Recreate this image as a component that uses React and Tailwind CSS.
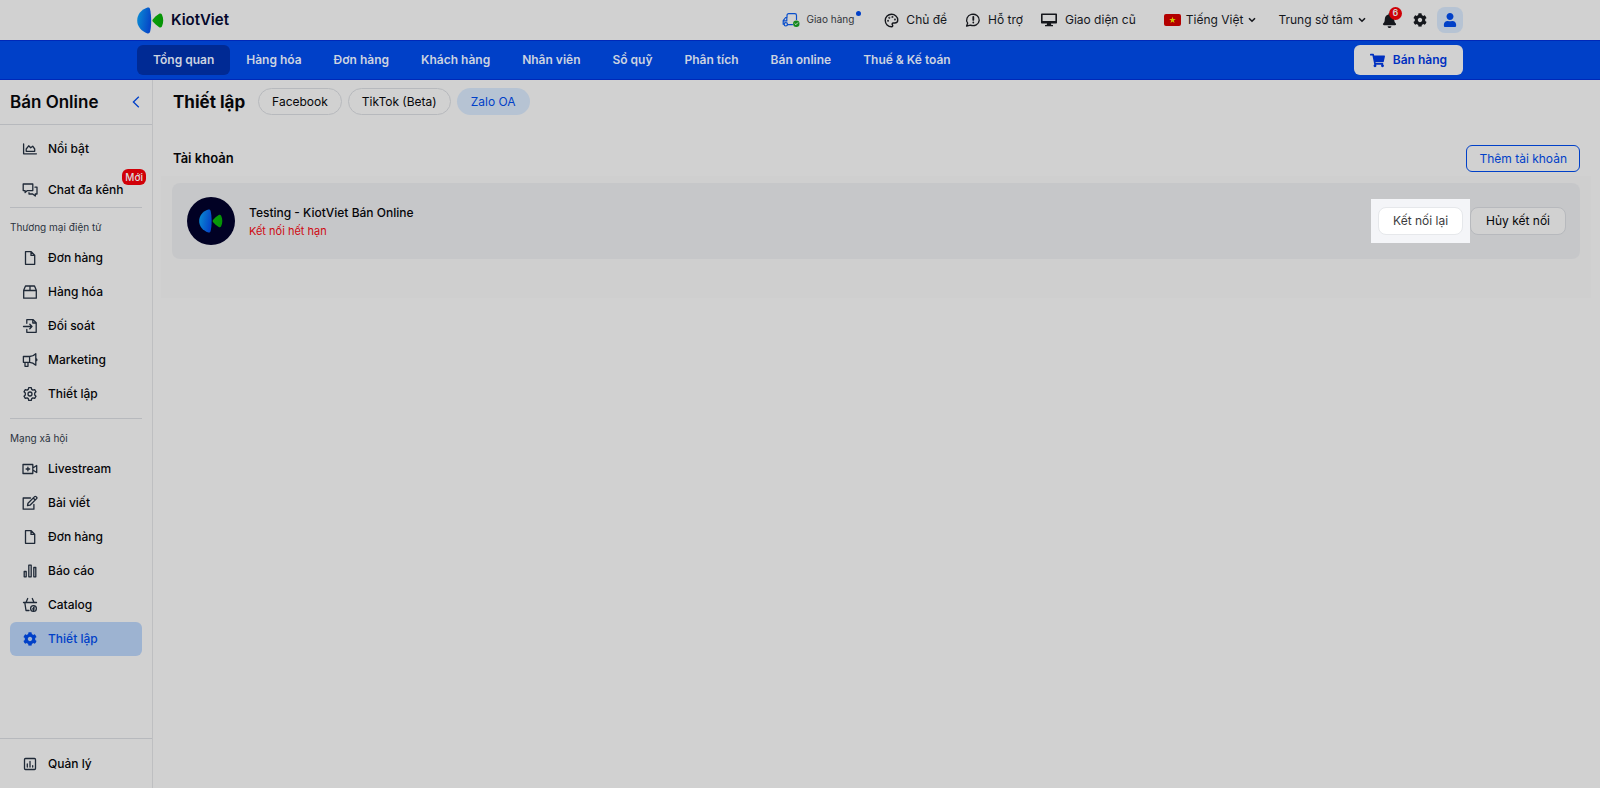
import { FaBell, FaCog, FaShoppingCart, FaUser } from 'react-icons/fa';
import { Palette } from 'lucide-react';
import clsx from 'clsx';

function Logo({ className }) {
  return (
    <svg viewBox="0 0 27 27" className={className} aria-hidden="true">
      <defs>
        <linearGradient id="logoBlue" x1="0" y1="0" x2="1" y2="0.3">
          <stop offset="0" stopColor="#0a8fd4" />
          <stop offset="1" stopColor="#0648c8" />
        </linearGradient>
        <linearGradient id="logoGreen" x1="0" y1="0" x2="1" y2="0">
          <stop offset="0" stopColor="#0b9c0b" />
          <stop offset="1" stopColor="#049304" />
        </linearGradient>
      </defs>
      <path d="M10.5.6c1.2-.3 2.1.2 2.5 1.3 1.6 6.4 1.6 16.8 0 23.2-.4 1.1-1.3 1.6-2.5 1.3C4.2 24.3.2 19.3.2 13.5S4.2 2.7 10.5.6z" fill="url(#logoBlue)" />
      <path d="M15.7 12.4c1.8-2.2 4-4.1 6.5-5.7 1-.6 2.2-.3 2.7.8 1.8 3.7 1.8 8.3 0 12-.5 1.1-1.7 1.4-2.7.8-2.5-1.6-4.7-3.5-6.5-5.7-.5-.7-.5-1.5 0-2.200z" fill="url(#logoGreen)" />
    </svg>
  );
}

function Icon({ children }) {
  return (
    <svg
      viewBox="0 0 16 16"
      fill="none"
      stroke="currentColor"
      strokeWidth="1.3"
      strokeLinecap="round"
      strokeLinejoin="round"
      className="size-4 shrink-0"
      aria-hidden="true"
    >
      {children}
    </svg>
  );
}

const FileIcon = () => (
  <Icon>
    <path d="M3.500 1.700h5.700L12.700 5.200v9.100H3.500zM9 1.700v3.700h3.700" />
  </Icon>
);

const ChartAreaIcon = () => (
  <Icon>
    <path d="M1.600 3v9.800h12.800M4.200 10.300V8l2.500-3.200 2 2 2-1.600 2 2.800v2.300z" />
  </Icon>
);

const ChatIcon = () => (
  <Icon>
    <path d="M1.200 2h9.600v6.600H5.400L3.100 10.500V8.600H1.200zM13 5.200h2v6.800h-1.700v2l-2.600-2H7v-1.300" />
  </Icon>
);

const BoxIcon = () => (
  <Icon>
    <path d="M1.700 6.300 3.500 2h9l1.800 4.300v7.900H1.700zM1.700 6.500h12.600M8 2v4.500" />
  </Icon>
);

const ImportIcon = () => (
  <Icon>
    <path d="M4.800 5.300V1.700h6.400l3 3v9.600H4.800v-3M10.800 1.700V5h3.400M1.500 8.500H10M7.800 6.300 10 8.500l-2.200 2.200" />
  </Icon>
);

const MegaphoneIcon = () => (
  <Icon>
    <path d="M1.400 4.500h6.200c2.300 0 4.400-1 6.200-2.800v11.500c-1.800-1.800-3.900-2.900-6.200-2.900H1.400zM7.600 4.500v5.800M3 10.300v4h3v-4M14 6.500c1.200.4 1.200 2 0 2.400" />
  </Icon>
);

const GearIcon = () => (
  <Icon>
    <path d="M6.700 1.600h2.600l.4 1.800 1.200.7 1.800-.5 1.300 2.200L12.700 7v2l1.300 1.200-1.300 2.200-1.800-.5-1.200.7-.4 1.800H6.700l-.4-1.800-1.200-.7-1.800.5L2 10.200 3.300 9V7L2 5.800l1.300-2.200 1.800.5 1.200-.7z" />
    <circle cx="8" cy="8" r="2" />
  </Icon>
);

const VideoIcon = () => (
  <Icon>
    <path d="M1 3.500h9.800v9H1zM10.800 7l3.900-2.500v7L10.800 9M5.900 6.200v3.600M4.100 8h3.600" />
  </Icon>
);

const EditIcon = () => (
  <Icon>
    <path d="M8.500 3H1.200v11.200h10.700V9.500M6 8.200 12.600 1.600c.4-.4 1-.4 1.400 0l.6.6c.4.4.4 1 0 1.400L8 10.200l-2.500.5zM11.200 3l2 2" />
  </Icon>
);

const BarsIcon = () => (
  <Icon>
    <path d="M2.200 8.500h2v5.300h-2zM6.800 2.200h2.400v11.600H6.800zM11.800 4.500h2v9.300h-2z" />
  </Icon>
);

const BasketIcon = () => (
  <Icon>
    <path d="M1.500 5.500h13M5.700 1.500 4 5.500M10.300 1.500 12 5.500M2.800 5.500l1.200 8H7" />
    <circle cx="11.500" cy="11.500" r="2.900" />
    <path d="M11.500 14.200v-3.400c0-.6.400-.9 1-.9M10.600 11.900h1.700" />
  </Icon>
);

const ReportIcon = () => (
  <Icon>
    <rect x="2.500" y="2.500" width="11" height="11" rx="1" />
    <path d="M5.300 8v3M8 5.500V11M10.700 9.700V11" />
  </Icon>
);

const TruckIcon = () => (
  <svg viewBox="0 0 18 16" fill="none" strokeLinecap="round" strokeLinejoin="round" className="h-4 w-[18px]" aria-hidden="true">
    <g stroke="#0b4fcb" strokeWidth="1.2">
      <path d="M5 5.500V3.400c0-1 .7-1.800 1.700-1.800h6.100c1 0 1.700.8 1.700 1.800v4M5 5.500H3.600L1.200 8.700v3.500h1M5.500 12.600h5M1.200 8.900h3.600V5.500" />
      <circle cx="3.800" cy="12.300" r="1.700" />
    </g>
    <circle cx="14.300" cy="11.700" r="3.200" fill="#148a1c" />
    <path d="m12.900 11.700 1 1 1.800-1.900" stroke="#d1d1d1" />
  </svg>
);

const SupportIcon = () => (
  <Icon>
    <path d="M1.600 14 2.700 11.100A6.300 5.700 0 1 1 5.500 13.200z" />
    <path d="M8.300 4.800v3.100M8.300 10.400v.1" strokeWidth="1.800" />
  </Icon>
);

const MonitorIcon = () => (
  <svg viewBox="0 0 16 16" className="size-4" aria-hidden="true">
    <path fillRule="evenodd" fill="currentColor" d="M1 1.500h14c.6 0 1 .4 1 1v8c0 .6-.4 1-1 1h-5l.3 1.600h1.700v1.200H4v-1.200h1.700L6 11.500H1c-.6 0-1-.4-1-1v-8c0-.6.4-1 1-1zM1.600 3v5.900h12.800V3z" />
  </svg>
);

const FlagIcon = () => (
  <svg viewBox="0 0 17 12" className="h-3 w-[17px]" aria-hidden="true">
    <rect width="17" height="12" rx="2" fill="#b30000" />
    <path d="m8.500 2.700.8 2.400h2.500l-2 1.500.7 2.400-2-1.500-2 1.500.7-2.400-2-1.500h2.500z" fill="#d1c400" />
  </svg>
);

const ChevronIcon = () => (
  <svg viewBox="0 0 8 6" fill="none" stroke="currentColor" strokeWidth="1.6" className="h-[6px] w-2" aria-hidden="true">
    <path d="m1 1.200 3 3 3-3" />
  </svg>
);

const navItems = ['Tổng quan', 'Hàng hóa', 'Đơn hàng', 'Khách hàng', 'Nhân viên', 'Sổ quỹ', 'Phân tích', 'Bán online', 'Thuế & Kế toán'];

const commerceItems = [
  { label: 'Đơn hàng', icon: <FileIcon /> },
  { label: 'Hàng hóa', icon: <BoxIcon /> },
  { label: 'Đối soát', icon: <ImportIcon /> },
  { label: 'Marketing', icon: <MegaphoneIcon /> },
  { label: 'Thiết lập', icon: <GearIcon /> },
];

const socialItems = [
  { label: 'Livestream', icon: <VideoIcon /> },
  { label: 'Bài viết', icon: <EditIcon /> },
  { label: 'Đơn hàng', icon: <FileIcon /> },
  { label: 'Báo cáo', icon: <BarsIcon /> },
  { label: 'Catalog', icon: <BasketIcon /> },
  { label: 'Thiết lập', icon: <FaCog className="size-[14px]" />, active: true },
];

function SideItem({ label, icon, active }) {
  return (
    <a
      href="#"
      className={clsx(
        'flex h-[34px] items-center gap-[10px] rounded-md pl-3 text-xs font-medium',
        active ? 'bg-[#9db3d1] text-[#0040c8]' : 'text-[#060609]'
      )}
    >
      <span className={clsx('flex w-4 justify-center', !active && 'text-[#1f2937]')}>{icon}</span>
      {label}
    </a>
  );
}

function TopBar() {
  return (
    <header className="flex h-10 items-center justify-between px-[137px] text-xs text-[#15171c]">
      <a href="#" className="flex items-center gap-[7px] text-[15px] font-semibold text-[#04082b]">
        <Logo className="size-[27px]" />
        KiotViet
      </a>
      <div className="flex items-center">
        <a href="#" className="relative mr-[30px] flex items-center gap-[6px] text-[10px] text-[#33363c]">
          <TruckIcon />
          Giao hàng
          <span className="absolute -top-[1px] -right-[7px] size-[5px] rounded-full bg-[#0040c8]" />
        </a>
        <button className="mr-[18px] flex items-center gap-[7px]">
          <Palette className="size-[15px]" strokeWidth={2.2} />
          Chủ đề
        </button>
        <a href="#" className="mr-[18px] flex items-center gap-[7px]">
          <SupportIcon />
          Hỗ trợ
        </a>
        <a href="#" className="mr-[28px] flex items-center gap-2">
          <MonitorIcon />
          Giao diện cũ
        </a>
        <button className="mr-[22px] flex items-center gap-[5px]">
          <FlagIcon />
          Tiếng Việt
          <ChevronIcon />
        </button>
        <button className="mr-[16px] flex items-center gap-[5px]">
          Trung sờ tâm
          <ChevronIcon />
        </button>
        <button className="relative mr-4" aria-label="Thông báo">
          <FaBell className="size-[15px]" />
          <span className="absolute -top-[6px] -right-[5px] flex size-[13px] items-center justify-center rounded-full bg-[#cf0006] text-[9px] font-semibold text-[#d1d1d1]">
            6
          </span>
        </button>
        <button className="mr-[10px]" aria-label="Cài đặt">
          <FaCog className="size-[14px]" />
        </button>
        <button className="flex size-[26px] items-center justify-center rounded-lg bg-[#b6c3d3] text-[#0040c8]" aria-label="Tài khoản">
          <FaUser className="size-[14px]" />
        </button>
      </div>
    </header>
  );
}

function MainNav() {
  return (
    <nav className="flex h-10 items-center justify-between border-y border-[#0028b8] bg-[#0040c8] px-[137px]">
      <div className="flex">
        {navItems.map((item, index) => (
          <a
            key={item}
            href="#"
            className={clsx(
              'flex h-[30px] items-center rounded-md px-4 text-xs font-semibold text-[#ccd3e0]',
              index === 0 && 'bg-[#002a94]'
            )}
          >
            {item}
          </a>
        ))}
      </div>
      <button className="flex h-[30px] items-center gap-2 rounded-md bg-[#d1d1d1] px-4 text-xs font-semibold text-[#0030c0]">
        <FaShoppingCart className="size-[15px]" />
        Bán hàng
      </button>
    </nav>
  );
}

function Sidebar() {
  return (
    <aside className="flex w-[153px] shrink-0 flex-col border-r border-[#bebfc1]">
      <div className="flex h-[45px] items-center justify-between border-b border-[#b7b9bd] pr-3 pl-[10px]">
        <h2 className="text-[17px] leading-6 font-semibold text-[#060609]">Bán Online</h2>
        <button className="text-[#0040c8]" aria-label="Thu gọn">
          <svg viewBox="0 0 8 12" fill="none" stroke="currentColor" strokeWidth="1.3" className="h-3 w-2">
            <path d="M6.800.8 1.400 6l5.400 5.200" />
          </svg>
        </button>
      </div>
      <div className="flex-1 px-[10px] pt-[7px]">
        <SideItem label="Nổi bật" icon={<ChartAreaIcon />} />
        <div className="relative mt-[7px]">
          <SideItem label="Chat đa kênh" icon={<ChatIcon />} />
          <span className="absolute -top-1 -right-1 flex h-4 items-center rounded-md bg-[#d10008] px-[3px] text-[10px] font-medium text-[#dcdcdc]">
            Mới
          </span>
        </div>
        <hr className="border-[#b7b9bd]" />
        <h3 className="mt-[9px] mb-1 text-[10px] leading-5 text-[#2b3340]">Thương mại điện tử</h3>
        {commerceItems.map((item) => (
          <SideItem key={item.label} {...item} />
        ))}
        <hr className="mt-[7px] border-[#b7b9bd]" />
        <h3 className="mt-[9px] mb-1 text-[10px] leading-5 text-[#2b3340]">Mạng xã hội</h3>
        {socialItems.map((item) => (
          <SideItem key={item.label} {...item} />
        ))}
      </div>
      <div className="flex h-[50px] flex-col justify-center border-t border-[#b7b9bd] px-[10px]">
        <SideItem label="Quản lý" icon={<ReportIcon />} />
      </div>
    </aside>
  );
}

export default function App() {
  return (
    <div className="flex min-h-screen flex-col bg-[#d1d1d1] font-['Inter',sans-serif] text-[#060609]">
      <TopBar />
      <MainNav />
      <div className="flex flex-1">
        <Sidebar />
        <main className="min-w-0 flex-1 pt-2 pr-[9px] pl-2">
          <div className="flex items-center pl-3">
            <h1 className="mr-[13px] text-[17px] leading-6 font-bold">Thiết lập</h1>
            <div className="flex gap-[6px] text-xs">
              <button className="h-[27px] rounded-full border border-[#b7b9bd] px-[13px]">Facebook</button>
              <button className="h-[27px] rounded-full border border-[#b7b9bd] px-[13px]">TikTok (Beta)</button>
              <button className="h-[27px] rounded-full bg-[#b6c3d3] px-[14px] text-[#0040c8]">Zalo OA</button>
            </div>
          </div>

          <div className="mt-[30px] flex items-center justify-between pr-[11px] pl-3">
            <h2 className="text-[13px] font-semibold">Tài khoản</h2>
            <button className="h-[27px] rounded-md border border-[#0040c8] px-3 text-xs text-[#0040c8]">Thêm tài khoản</button>
          </div>

          <section className="mt-1 bg-[#cfcfcf] px-[11px] pt-[7px] pb-[39px]">
            <div className="flex h-[76px] items-center rounded-lg bg-[#c6c7c9] pr-[14px] pl-[15px]">
              <div className="flex size-12 items-center justify-center rounded-full bg-[#010124]">
                <Logo className="size-6" />
              </div>
              <div className="ml-[14px] flex-1">
                <p className="text-xs leading-5 font-medium">Testing - KiotViet Bán Online</p>
                <p className="text-[11px] leading-4 text-[#cf0a12]">Kết nối hết hạn</p>
              </div>
              {/* highlighted step */}
              <div className="bg-[#f4f5f8] px-[7px] py-2">
                <button className="h-7 rounded-lg border border-[#e6e8eb] bg-white px-[14px] text-xs text-[#3c3c40]">
                  Kết nối lại
                </button>
              </div>
              <button className="h-7 rounded-lg border border-[#b7b9bd] bg-[#d1d1d1] px-[15px] text-xs">Hủy kết nối</button>
            </div>
          </section>
        </main>
      </div>
    </div>
  );
}
